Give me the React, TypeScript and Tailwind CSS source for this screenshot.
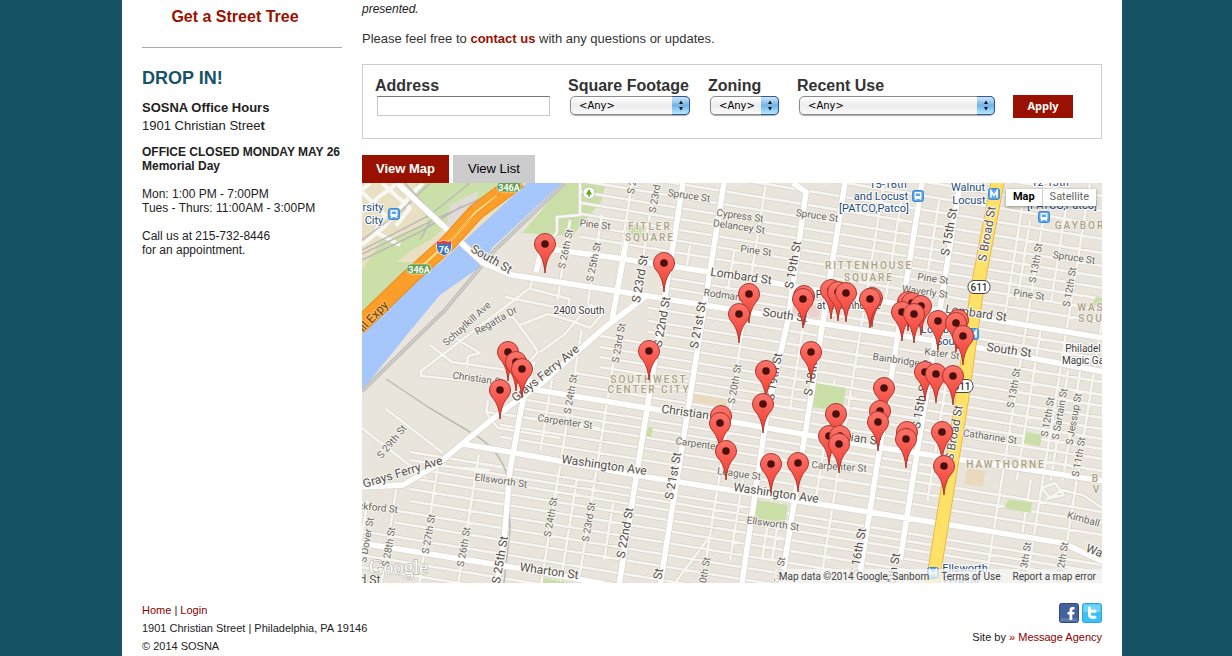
import type { ReactNode } from "react";

type Point = [number, number];
type Label = [text: string, x: number, y: number, angle: number];

const EW = 0.163;
const NS = 0.159;

// Streets follow a grid turned about nine degrees.
const ew = (y0: number, x1: number, x2: number) =>
  `M${x1} ${y0 + (x1 - 600) * EW}L${x2} ${y0 + (x2 - 600) * EW}`;
const ns = (x0: number, y1: number, y2: number) =>
  `M${x0 - (y1 - 183) * NS} ${y1}L${x0 - (y2 - 183) * NS} ${y2}`;

const minor = [
  ...[100, 114, 129, 143, 157, 171].map((y) => ew(y, 600, 1110)),
  ...[184, 195, 206, 217, 228, 240].map((y) => ew(y, 580, 1110)),
  ...[267, 277].map((y) => ew(y, 660, 1110)),
  ...[300, 313, 324].map((y) => ew(y, 648, 1110)),
  ...[336, 347, 357, 367].map((y) => ew(y, 600, 1110)),
  ...[377, 389].map((y) => ew(y, 575, 1110)),
  ...[412, 421].map((y) => ew(y, 525, 955)),
  ...[430, 441, 453].map((y) => ew(y, 500, 1110)),
  ...[483, 491, 499, 509, 520, 532].map((y) => ew(y, 410, 1110)),
  ...[544, 556].map((y) => ew(y, 395, 1110)),
  ...[570, 582, 594, 606].map((y) => ew(y, 362, 1110)),
  ns(766, 183, 583),
  ns(884, 183, 583),
  ns(1049, 183, 583),
  ns(1090, 183, 583),
  ns(1124, 183, 583),
  ns(1110, 370, 480),
  ns(1098, 370, 480),
  ns(1070, 200, 300),
  ns(1026, 190, 320),
  ns(1036, 220, 300),
  ns(1064, 330, 480),
  ns(1078, 480, 540),
  ns(655, 183, 310),
  ns(632, 183, 290),
  ns(607, 215, 305),
  ns(576, 220, 300),
  ns(642, 330, 583),
  ns(605, 330, 583),
  ns(624, 480, 583),
  ns(583, 365, 450),
  ns(522, 455, 583),
  ns(483, 465, 583),
  ns(445, 485, 583),
  ns(418, 500, 583),
  ns(700, 245, 272),
  ns(745, 250, 290),
  ns(826, 330, 410),
  ns(866, 380, 500),
  ns(904, 200, 300),
  ns(942, 200, 270),
  ns(978, 370, 500),
  ns(832, 490, 560),
  ns(822, 490, 560),
  ns(790, 480, 560),
  ns(664, 500, 560),
  "M580 183L580 215L557 217L557 232L542 252",
  "M533 277L530 288L421 371L421 376L500 384",
  "M505 297L560 308L600 312",
  "M531 289L570 299L566 313L558 306",
  "M430 345L452 362L520 372",
  "M455 338L480 353L468 356L467 368",
  "M480 330L512 316L530 340L538 352L520 372",
  "M520 325L548 314L575 322L565 334L540 352",
  "M575 322L590 305L604 312L590 328L574 322",
  "M386 409L443 453",
  "M362 428L426 478",
  "M488 400L486 413L498 428L560 438",
  "M486 412L600 428",
  "M440 466L490 470",
  "M707 540L675 583",
  "M1046 500L1062 490L1083 495L1102 508",
  "M1042 488L1055 483L1064 495L1050 498Z",
];

const major = [
  "M397 183L483 263L512 275L610 290L760 314L980 348L1104 372",
  "M536 272L542 248L610 257L710 272L850 296L1104 338",
  "M525 388L610 402L733 422L870 446L1104 481",
  "M463 444L510 452L647 477L850 509L1063 543L1082 552L1104 562",
  "M360 543L517 568L605 584",
  "M360 487L403 485L437 465L463 443L500 413L543 382L604 328L645 297",
  ns(683, 183, 583),
  ns(724, 183, 583),
  "M793 183L806 192L788 320L767 413L742 583",
  ns(845, 183, 583),
  ns(922, 183, 583),
  ns(960, 183, 560),
  "M533 362L521 410L510 470L504 540L497 583",
  "M628 232L612 320",
];

const campus = [
  "M362 192L385 215L375 232L400 245",
  "M362 245L385 226L410 196L423 183",
  "M362 212L380 196L398 183",
  "M382 183L410 208L396 226",
  "M370 183L362 190",
];

const riverRail = "M565 183L495 250L445 310L362 391";

const rails = [
  "M362 250L430 215L470 183",
  "M362 254L440 217L500 190",
  "M362 260L420 232L462 206",
  "M405 183L434 215L420 240",
  "M362 240L400 212L430 183",
  "M386 379L428 407L470 432Q500 448 508 478L510 530L504 583",
];

const fills: { d: string; className: string }[] = [
  { d: "M362 183H545L440 270L362 340Z", className: "fill-[#e9dfc3]" },
  { d: "M415 183H500L430 240L390 262L384 244L428 224Z", className: "fill-[#cbdfa9]" },
  { d: "M385 236L412 250L396 262L418 262L385 300L362 318V270Z", className: "fill-[#cbdfa9]" },
  { d: "M450 205L480 190L465 225L445 235Z", className: "fill-[#e0dbd4]" },
  { d: "M565 183H606L601 202L572 236L522 233Z", className: "fill-[#c9dfa7]" },
];

const blocks: { d: string; className: string }[] = [
  { d: "M630 225L645 227L643 237L628 234Z", className: "fill-[#cbdfa9]" },
  { d: "M816 383L846 388L842 411L811 407Z", className: "fill-[#c9dfa7]" },
  { d: "M757 500L788 505L785 525L754 520Z", className: "fill-[#c9dfa7]" },
  { d: "M1026 432L1042 435L1040 446L1024 443Z", className: "fill-[#c9dfa7]" },
  { d: "M1008 500L1032 502L1031 513L1004 508Z", className: "fill-[#c9dfa7]" },
  { d: "M1096 297L1104 298V308L1092 304Z", className: "fill-[#c9dfa7]" },
  { d: "M648 427L653 427L651 437L646 436Z", className: "fill-[#c9dfa7]" },
  { d: "M543 578L570 583H543Z", className: "fill-[#c9dfa7]" },
  { d: "M692 394L728 400L726 406L690 402Z", className: "fill-[#e9dcbe]" },
  { d: "M967 468L985 471L983 487L964 484Z", className: "fill-[#e9dabd]" },
  { d: "M792 302L822 306L818 318L790 314Z", className: "fill-[#edd0cd]" },
];

const pins: Point[] = [
  [545, 244], [664, 263], [749, 294], [739, 314], [804, 296], [803, 299],
  [831, 290], [838, 292], [846, 293], [872, 298], [870, 299], [508, 352],
  [516, 362], [522, 369], [649, 351], [811, 352], [766, 371], [500, 390],
  [763, 404], [721, 416], [720, 423], [726, 451], [771, 464], [798, 463],
  [836, 414], [829, 436], [840, 436], [839, 444], [884, 388], [880, 411],
  [878, 422], [907, 432], [906, 439], [942, 432], [944, 466], [908, 302],
  [912, 303], [921, 306], [902, 312], [914, 314], [938, 321], [958, 320],
  [956, 323], [963, 336], [925, 372], [936, 374], [953, 376],
];

const smallLabels: Label[] = [
  ["Spruce St", 689, 199, 8],
  ["Cypress St", 740, 219, 8],
  ["Delancey St", 739, 230, 8],
  ["Pine St", 756, 254, 8],
  ["Spruce St", 817, 219, 8],
  ["Pine St", 595, 228, 6],
  ["Pine St", 933, 282, 8],
  ["Waverly St", 925, 295, 8],
  ["Spruce St", 1074, 261, 8],
  ["Pine St", 1029, 298, 8],
  ["Rodman St", 728, 299, 8],
  ["Kater St", 942, 357, 8],
  ["Bainbridge St", 902, 364, 8],
  ["Catharine St", 990, 440, 8],
  ["Christian St", 478, 382, 8],
  ["Carpenter St", 565, 425, 8],
  ["Carpenter St", 703, 448, 8],
  ["Carpenter St", 839, 470, 4],
  ["League St", 739, 477, 8],
  ["Ellsworth St", 501, 484, 8],
  ["Ellsworth St", 773, 527, 8],
  ["Kimball St", 1089, 524, 16],
  ["ckford St", 378, 511, 6],
  ["Schuylkill Ave", 467, 327, -42],
  ["Regatta Dr", 496, 324, -30],
  ["S 26th St", 566, 252, -78],
  ["S 25th St", 594, 265, -78],
  ["S 23rd St", 656, 196, -80],
  ["S 2", 632, 190, -80],
  ["S 23rd St", 619, 346, -80],
  ["S 24th St", 571, 397, -80],
  ["S 20th St", 735, 387, -80],
  ["S 24th St", 551, 520, -80],
  ["S 23rd St", 589, 525, -80],
  ["S 26th St", 464, 550, -80],
  ["S 27th St", 429, 537, -80],
  ["S 28th St", 389, 550, -80],
  ["S Dover St", 367, 543, -80],
  ["S 29th St", 392, 445, -50],
  ["S 13th St", 1036, 266, -80],
  ["S 12th St", 1070, 290, -80],
  ["S 13th St", 1014, 391, -80],
  ["S 12th St", 1048, 420, -80],
  ["S Sartain St", 1060, 417, -80],
  ["S Jessup St", 1074, 422, -80],
  ["S 11th St", 1079, 460, -80],
  ["S 19th St", 779, 580, -80],
  ["S 20th St", 704, 580, -80],
  ["S 13th St", 1025, 565, -80],
  ["S 12th St", 1062, 565, -80],
];

const largeLabels: Label[] = [
  ["South St", 491, 263, 30],
  ["Lombard St", 741, 280, 8],
  ["South St", 785, 319, 8],
  ["Lombard St", 976, 317, 8],
  ["South St", 1009, 354, 8],
  ["Grays Ferry Ave", 546, 377, -39],
  ["Grays Ferry Ave", 403, 476, -17],
  ["Christian St", 692, 417, 8],
  ["Christian St", 850, 441, 8],
  ["Washington Ave", 604, 469, 8],
  ["Washington Ave", 776, 497, 8],
  ["Wharton St", 549, 575, 8],
  ["Wash", 1100, 557, 22],
  ["S 23rd St", 641, 282, -80],
  ["S 22nd St", 663, 325, -80],
  ["S 21st St", 699, 328, -80],
  ["S 19th St", 794, 268, -80],
  ["S 19th St", 775, 380, -80],
  ["S 15th St", 950, 235, -80],
  ["S 15th St", 921, 408, -80],
  ["S 18th St", 813, 375, -80],
  ["S 21st St", 674, 479, -80],
  ["S 22nd St", 626, 536, -80],
  ["S 25th St", 501, 563, -80],
  ["S 16th St", 859, 555, -80],
  ["S 15th St", 893, 580, -80],
  ["S 21st St", 656, 595, -80],
  ["d St", 370, 584, 0],
  ["S Broad St", 988, 237, -80],
  ["S Broad St", 955, 436, -80],
];

const areaLabels: Label[] = [
  ["FITLER", 650, 230, 0],
  ["SQUARE", 650, 241, 0],
  ["RITTENHOUSE", 869, 269, 0],
  ["SQUARE", 869, 281, 0],
  ["GAYBOR", 1080, 229, 0],
  ["WAS", 1091, 311, 0],
  ["SQU", 1091, 322, 0],
  ["SOUTHWEST", 649, 383, 0],
  ["CENTER CITY", 649, 393, 0],
  ["HAWTHORNE", 1006, 468, 0],
  ["B", 1096, 482, 0],
  ["V", 1097, 493, 0],
];

const placeLabels: Label[] = [
  ["rsity", 373, 211, 0],
  ["City", 374, 224, 0],
  ["15-16th", 888, 188, 0],
  ["and Locust", 881, 200, 0],
  ["[PATCO,Patco]", 874, 212, 0],
  ["Walnut", 968, 191, 0],
  ["Locust", 969, 204, 0],
  ["12-13th", 1050, 186, 0],
  ["[PATCO,Patco]", 1062, 209, 0],
  ["Lombard", 943, 333, 0],
  ["South", 950, 345, 0],
  ["Ellsworth", 965, 572, 0],
  ["Federal", 961, 584, 0],
];

const darkLabels: Label[] = [
  ["2400 South", 579, 314, 0],
  ["Philadel", 1083, 352, 0],
  ["Magic Ga", 1083, 364, 0],
  ["Penn", 827, 298, 0],
  ["at Rittenhouse", 849, 309, 0],
];

function Labels({ items, className }: { items: Label[]; className: string }) {
  return (
    <g className={className} textAnchor="middle" paintOrder="stroke" strokeLinejoin="round">
      {items.map(([text, x, y, angle], i) => (
        <text key={i} x={x} y={y} transform={`rotate(${angle} ${x} ${y - 3})`}>
          {text}
        </text>
      ))}
    </g>
  );
}

function Pin({ at: [x, y] }: { at: Point }) {
  return (
    <g transform={`translate(${x} ${y})`}>
      <path
        d="M0 29C-.8 20-2.5 14.500-6 9.500C-9 6-10.500 3.500-10.500 0A10.500 10.500 0 0 1 10.500 0C10.500 3.500 9 6 6 9.500C2.500 14.500.8 20 0 29Z"
        fill="url(#pin)"
        stroke="#a8362f"
        strokeWidth="1"
      />
      <circle r="3.800" fill="#4a100d" />
    </g>
  );
}

function TrainBadge({ x, y }: { x: number; y: number }) {
  return (
    <g transform={`translate(${x} ${y})`}>
      <rect x="-5.500" y="-5.500" width="11" height="11" rx="2" fill="#5aa5ee" stroke="#3d88d4" />
      <path d="M-2.500-4H2.500Q3.500-4 3.500-3V1.500Q3.500 2.500 2.500 2.500L3.500 4H2L1.300 3H-1.300L-2 4H-3.500L-2.500 2.500Q-3.500 2.500-3.500 1.500V-3Q-3.500-4-2.500-4Z" fill="#fff" />
      <path d="M-2.200-2.500H2.200V0H-2.200Z" fill="#5aa5ee" />
    </g>
  );
}

function MetroBadge({ x, y }: { x: number; y: number }) {
  return (
    <g transform={`translate(${x} ${y})`}>
      <rect x="-5.500" y="-5.500" width="11" height="11" rx="2" fill="#5aa5ee" stroke="#3d88d4" />
      <path d="M-3 3.500V-3L0 1.500L3-3V3.500" fill="none" stroke="#fff" strokeWidth="1.600" />
    </g>
  );
}

function ExitBadge({ x, y }: { x: number; y: number }) {
  return (
    <g transform={`translate(${x} ${y})`}>
      <rect x="-12" y="-5" width="24" height="10" rx="4" fill="#64a050" stroke="#fff" strokeWidth=".5" />
      <text y="3.500" textAnchor="middle" className="fill-white font-['Roboto',sans-serif] text-[9px] font-bold">
        346A
      </text>
    </g>
  );
}

function RouteBadge({ x, y }: { x: number; y: number }) {
  return (
    <g transform={`translate(${x} ${y})`}>
      <rect x="-11" y="-6.500" width="22" height="13" rx="6" fill="#fff" stroke="#444" />
      <text y="3.500" textAnchor="middle" className="fill-[#333] font-['Roboto',sans-serif] text-[10px] font-medium">
        611
      </text>
    </g>
  );
}

function StreetMap() {
  const minorPath = minor.join("");
  const majorPath = major.join("");
  return (
    <svg
      className="block h-[400px] w-full bg-[#e9e5dc]"
      viewBox="362 183 740 400"
      preserveAspectRatio="xMidYMid slice"
      role="img"
      aria-label="Map of vacant properties"
    >
      <defs>
        <linearGradient id="pin" x1="0" y1="0" x2="0" y2="1">
          <stop offset="0" stopColor="#fb756b" />
          <stop offset="1" stopColor="#f2382e" />
        </linearGradient>
      </defs>
      {fills.map((f) => (
        <path key={f.d} d={f.d} className={f.className} />
      ))}
      <g fill="none" strokeLinejoin="round">
        <path d={minorPath} stroke="#d9d4ca" strokeWidth="4" />
        <path d={minorPath} stroke="#f8f6f2" strokeWidth="2.600" />
        <path d={campus.join("")} stroke="#faf8f4" strokeWidth="4" />
      </g>
      {blocks.map((b) => (
        <path key={b.d} d={b.d} className={b.className} />
      ))}
      <path d="M527 183H562L493 247L480 267L440 295L410 331L360 393V333L393 297L440 263Z" fill="#a5c7fb" />
      <g fill="none" strokeLinejoin="round">
        <path d={riverRail} stroke="#c3c1be" strokeWidth="4" />
        <path d={riverRail} stroke="#d9d7d3" strokeWidth="1" />
        <path d={rails.join("")} stroke="#bcbab6" strokeWidth="1.500" />
        <path d={majorPath} stroke="#dcd7cd" strokeWidth="7" />
        <path d={majorPath} stroke="#fff" strokeWidth="5.500" />
        <path d="M519 180L476 212L448 243L410 277L358 327" stroke="#e88c20" strokeWidth="17" />
        <path d="M519 180L476 212L448 243L410 277L358 327" stroke="#fc9f2a" strokeWidth="15" />
        <path d="M497 196L476 212L453 238L422 266" stroke="#fde08c" strokeWidth="2" />
        <path d="M508 187L468 221L440 252" stroke="#e88c20" strokeWidth="1" />
        <path d="M998 180L977 290L962 400L932 586" stroke="#e8b94e" strokeWidth="14" />
        <path d="M998 180L977 290L962 400L932 586" stroke="#ffe168" strokeWidth="12" />
      </g>

      <Labels
        items={areaLabels}
        className="fill-[#aba287] stroke-[#f3f0e9] stroke-2 font-['Roboto',sans-serif] text-[10px] font-medium tracking-[2px]"
      />
      <Labels
        items={smallLabels}
        className="fill-[#6b675f] stroke-[#f5f3ee] stroke-2 font-['Roboto',sans-serif] text-[10px]"
      />
      <Labels
        items={largeLabels}
        className="fill-[#55514b] stroke-[#faf8f5] stroke-2 font-['Roboto',sans-serif] text-[12px]"
      />
      <Labels
        items={[["ill Expy", 374, 320, -47]]}
        className="fill-[#5c3d10] stroke-[#fdb55a] stroke-2 font-['Roboto',sans-serif] text-[12px]"
      />
      <Labels
        items={placeLabels}
        className="fill-[#1d4a7a] stroke-white stroke-2 font-['Roboto',sans-serif] text-[11px]"
      />
      <Labels
        items={darkLabels}
        className="fill-[#3a3a3a] stroke-white stroke-2 font-['Roboto',sans-serif] text-[10px]"
      />

      <TrainBadge x={394} y={214} />
      <TrainBadge x={918} y={196} />
      <TrainBadge x={1044} y={217} />
      <MetroBadge x={994} y={194} />
      <MetroBadge x={973} y={334} />
      <MetroBadge x={933} y={573} />
      <ExitBadge x={509} y={187} />
      <ExitBadge x={419} y={269} />
      <RouteBadge x={979} y={287} />
      <RouteBadge x={962} y={386} />
      <g transform="translate(444 248)">
        <path d="M-7-7Q-3.500-5.500 0-7.500Q3.500-5.500 7-7Q9 1 5 5L0 8L-5 5Q-9 1-7-7Z" fill="#3f75c0" stroke="#fff" strokeWidth=".8" />
        <path d="M-7-7Q-3.500-5.500 0-7.500Q3.500-5.500 7-7L7.500-4H-7.500Z" fill="#d0444a" />
        <text y="4.500" textAnchor="middle" className="fill-white font-['Roboto',sans-serif] text-[9px] font-bold">
          76
        </text>
      </g>
      <g transform="translate(589 193)">
        <circle r="6" fill="#fff" stroke="#bdb9b0" strokeWidth=".8" />
        <path d="M0-4L3 1.500H.8V3.500H-.8V1.500H-3Z" fill="#59a80f" />
      </g>

      {[...pins].sort((a, b) => a[1] - b[1]).map((at) => (
        <Pin key={at.join()} at={at} />
      ))}
      <text
        x="369"
        y="574"
        className="fill-white stroke-[#a5a199] stroke-1 font-['Liberation_Serif',serif] text-[20px]"
        paintOrder="stroke"
      >
        Google
      </text>
    </svg>
  );
}

function Field({ id, label, className, children }: { id: string; label: string; className: string; children: ReactNode }) {
  return (
    <div className={className}>
      <label htmlFor={id} className="block text-base leading-5 font-bold whitespace-nowrap text-[#333]">
        {label}
      </label>
      <div className="pl-[2px]">{children}</div>
    </div>
  );
}

function AnySelect({ id }: { id: string }) {
  return (
    <div className="relative">
      <select
        id={id}
        className="block h-[19px] w-full appearance-none rounded-[5px] border border-[#8b8b8b] bg-linear-to-b from-white via-[#ececec] to-[#fbfbfb] pl-2 font-['DejaVu_Sans',sans-serif] text-[10px] text-black shadow-[0_1px_1px_#00000055]"
      >
        <option>&lt;Any&gt;</option>
      </select>
      <span className="pointer-events-none absolute inset-y-0 right-0 flex w-[18px] items-center justify-center rounded-r-[5px] border border-l-0 border-[#33559c] bg-linear-to-b from-[#cfe6fa] via-[#70b3e8] to-[#b5ebff]">
        <svg viewBox="0 0 6 11" className="h-[11px] w-[6px]" aria-hidden="true">
          <path d="M3 .5L5 4H1ZM3 10.500L1 7H5Z" fill="#111" />
        </svg>
      </span>
    </div>
  );
}

function Sidebar() {
  return (
    <aside className="w-[200px] shrink-0 text-xs leading-[14px] text-[#222]">
      <div className="border-b border-[#aaa] pt-[7px] pr-[14px] pb-5 text-center">
        <a href="#tree" className="text-base leading-5 font-bold text-[#991100]">
          Get a Street Tree
        </a>
      </div>
      <h2 className="mt-[18px] text-lg leading-6 font-bold text-[#15536a]">DROP IN!</h2>
      <p className="mt-[9px] text-[13px] leading-[18px]">
        <b>SOSNA Office Hours</b>
        <br />
        1901 Christian Stree<b>t</b>
      </p>
      <p className="mt-[10px] font-bold whitespace-nowrap">
        OFFICE CLOSED MONDAY MAY 26
        <br />
        Memorial Day
      </p>
      <p className="mt-[14px]">
        Mon: 1:00 PM - 7:00PM
        <br />
        Tues - Thurs: 11:00AM - 3:00PM
      </p>
      <p className="mt-[14px]">
        Call us at 215-732-8446
        <br />
        for an appointment.
      </p>
    </aside>
  );
}

export default function App() {
  return (
    <div className="min-h-screen bg-[#155364] pl-3 font-['Liberation_Sans',Arial,sans-serif]">
      <div className="mx-auto min-h-screen max-w-[1000px] bg-white px-5">
        <div className="flex gap-5">
          <Sidebar />
          <main className="min-w-0 flex-1">
            <p className="text-xs leading-[18px] text-[#222] italic">presented.</p>
            <p className="mt-3 text-[13px] leading-[18px] text-[#333]">
              Please feel free to{" "}
              <a href="#contact" className="font-bold text-[#991100]">
                contact us
              </a>{" "}
              with any questions or updates.
            </p>

            <form className="mt-4 flex h-[75px] gap-[18px] border border-[#ccc] px-3 pt-[11px]">
              <Field id="address" label="Address" className="w-[175px]">
                <input
                  id="address"
                  type="text"
                  className="block h-5 w-full border border-[#c8c8c8] border-t-[#777] bg-white px-1 text-xs"
                />
              </Field>
              <Field id="footage" label="Square Footage" className="w-[122px]">
                <AnySelect id="footage" />
              </Field>
              <Field id="zoning" label="Zoning" className="w-[71px]">
                <AnySelect id="zoning" />
              </Field>
              <Field id="use" label="Recent Use" className="w-[198px]">
                <AnySelect id="use" />
              </Field>
              <button
                type="button"
                className="mt-[19px] h-[23px] w-[60px] bg-[#991100] font-['Open_Sans',sans-serif] text-[11px] font-bold text-white"
              >
                Apply
              </button>
            </form>

            <nav className="mt-4 flex gap-1 text-[13px] leading-7">
              <a href="#map" className="bg-[#991100] px-[14px] font-bold text-white">
                View Map
              </a>
              <a href="#list" className="bg-[#ccc] px-[15px] text-black">
                View List
              </a>
            </nav>

            <div className="relative">
              <StreetMap />
              <div className="absolute top-[6px] right-[6px] flex h-[17px] items-center divide-x divide-[#ccc] bg-white font-['Roboto',sans-serif] text-[11px] shadow-[0_1px_3px_#00000066]">
                <button type="button" className="h-full px-[7px] font-bold text-black">
                  Map
                </button>
                <button type="button" className="h-full px-[7px] text-[#666]">
                  Satellite
                </button>
              </div>
              <div className="absolute right-0 bottom-0 flex h-[14px] items-center gap-3 bg-[#f5f5f5]/75 pr-[6px] pl-1 font-['Roboto',sans-serif] text-[10px] text-[#444]">
                <span>Map data ©2014 Google, Sanborn</span>
                <a href="#terms">Terms of Use</a>
                <a href="#report">Report a map error</a>
              </div>
            </div>
          </main>
        </div>

        <footer className="flex justify-between pt-[18px] text-[11px] leading-[18px] text-[#222]">
          <div>
            <p>
              <a href="#home" className="text-[#880000]">
                Home
              </a>{" "}
              |{" "}
              <a href="#login" className="text-[#880000]">
                Login
              </a>
            </p>
            <p>1901 Christian Street | Philadelphia, PA 19146</p>
            <p>© 2014 SOSNA</p>
          </div>
          <div className="flex flex-col items-end pt-[2px]">
            <div className="flex gap-[3px]">
              <a href="#facebook" aria-label="Facebook">
                <svg viewBox="0 0 20 20" className="size-5">
                  <rect x=".5" y=".5" width="19" height="19" rx="2" fill="#44609d" stroke="#2c4a88" />
                  <path d="M1.500 15H18.500V18.500H1.500Z" fill="#6079b3" />
                  <path d="M10.500 17V11.500H8.500V9H10.500V7.200Q10.500 4 13.500 4H15.500V6.500H14.300Q13.300 6.500 13.300 7.500V9H15.500L15.200 11.500H13.300V17Z" fill="#fff" />
                </svg>
              </a>
              <a href="#twitter" aria-label="Twitter">
                <svg viewBox="0 0 20 20" className="size-5">
                  <rect x=".5" y=".5" width="19" height="19" rx="2" fill="#3cc0f5" stroke="#2ba6dc" />
                  <path d="M1.500 1.500H18.500V9H1.500Z" fill="#6fd5fb" />
                  <path d="M7.500 5V11.500Q7.500 14.300 10.300 14.300H13M7.500 8.300H13" fill="none" stroke="#fff" strokeWidth="3" strokeLinecap="round" />
                </svg>
              </a>
            </div>
            <p className="mt-[5px]">
              Site by{" "}
              <a href="#agency" className="text-[#880000]">
                » Message Agency
              </a>
            </p>
          </div>
        </footer>
      </div>
    </div>
  );
}
